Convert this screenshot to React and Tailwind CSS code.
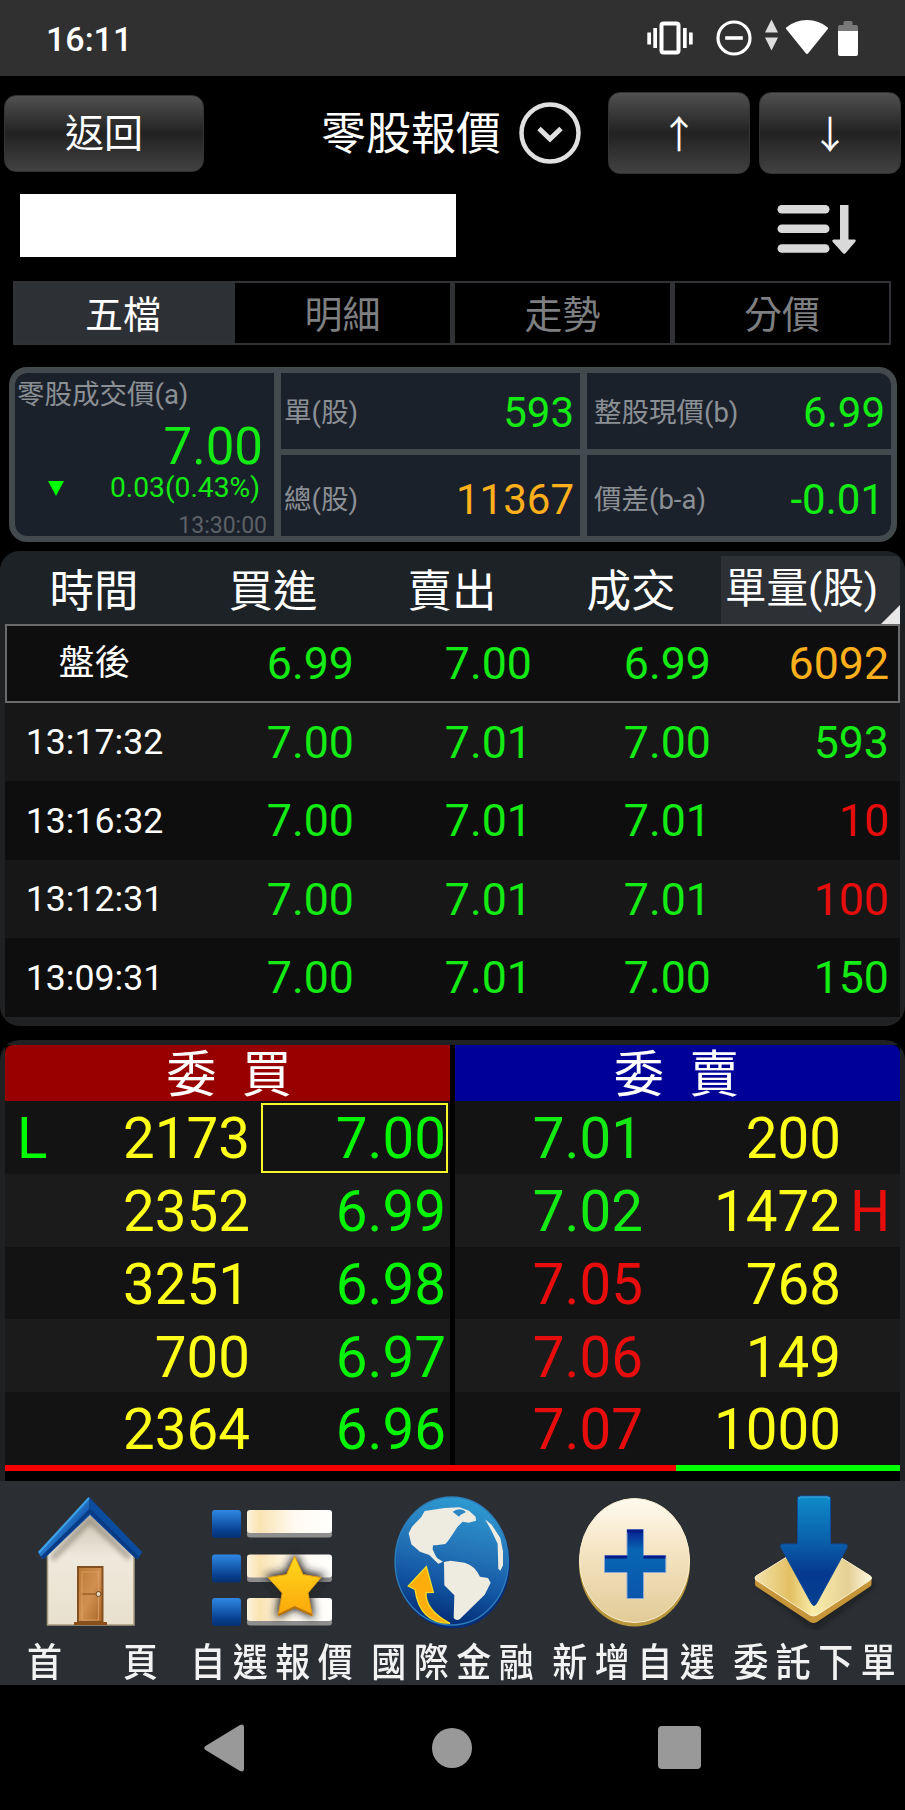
// App.jsx
const GREEN = "text-[#14ea14]";
const RED = "text-[#e80d0d]";
const ORANGE = "text-[#fdb01c]";

const tabs = ["五檔", "明細", "走勢", "分價"];

const trades = [
  { time: "盤後", bid: "6.99", ask: "7.00", price: "6.99", vol: "6092", volColor: ORANGE },
  { time: "13:17:32", bid: "7.00", ask: "7.01", price: "7.00", vol: "593", volColor: GREEN },
  { time: "13:16:32", bid: "7.00", ask: "7.01", price: "7.01", vol: "10", volColor: RED },
  { time: "13:12:31", bid: "7.00", ask: "7.01", price: "7.01", vol: "100", volColor: RED },
  { time: "13:09:31", bid: "7.00", ask: "7.01", price: "7.00", vol: "150", volColor: GREEN },
];

const bids = [
  { mark: "L", vol: "2173", price: "7.00" },
  { vol: "2352", price: "6.99" },
  { vol: "3251", price: "6.98" },
  { vol: "700", price: "6.97" },
  { vol: "2364", price: "6.96" },
];

const asks = [
  { price: "7.01", vol: "200", color: GREEN },
  { price: "7.02", vol: "1472", color: GREEN, mark: "H" },
  { price: "7.05", vol: "768", color: RED },
  { price: "7.06", vol: "149", color: RED },
  { price: "7.07", vol: "1000", color: RED },
];

function StatusBar() {
  return (
    <div className="flex h-[76px] items-center justify-between bg-[#303030] pl-[46px] pr-[46px]">
      <span className="pt-[2px] text-[34px] leading-none font-medium">16:11</span>
      <div className="flex items-center">
        <svg width="46" height="34" viewBox="0 0 46 34" fill="#fff" className="mr-[23px]">
          <rect x="14.5" y="2.5" width="17" height="29" rx="2" fill="none" stroke="#fff" strokeWidth="4" />
          <rect x="6.3" y="7" width="3.7" height="20" />
          <rect x="0.3" y="11.5" width="3.7" height="12" />
          <rect x="36" y="7" width="3.7" height="20" />
          <rect x="42" y="11.5" width="3.7" height="12" />
        </svg>
        <svg width="36" height="36" viewBox="0 0 36 36" fill="none" stroke="#fff" className="mr-[13px]">
          <circle cx="18" cy="18" r="16" strokeWidth="3.2" />
          <path d="M9.2 18h17.6" strokeWidth="3.6" />
        </svg>
        <svg width="13" height="32" viewBox="0 0 13 32" fill="#ddd" className="mr-[7px] -mt-[6px]">
          <path d="M6.5 0.5L13 13.5H0z" />
          <path d="M0 18.5h13L6.5 31.5z" />
        </svg>
        <svg width="44" height="36" viewBox="0 0 44 36" fill="#fff" className="mr-[9px] -mt-[3px]">
          <path d="M1.2 8.5Q10 1 22 1t20.8 7.5q.6.7 0 1.5L23.2 34.3q-1.2 1.3-2.4 0L1.2 10q-.6-.8 0-1.5z" />
        </svg>
        <svg width="20" height="35" viewBox="0 0 20 35" className="mr-px">
          <path d="M5.5 4V1.5Q5.5 0 7 0h6q1.5 0 1.5 1.5V4H18q2 0 2 2v5H0V6q0-2 2-2z" fill="#797979" />
          <path d="M0 10h20v23q0 2-2 2H2q-2 0-2-2z" fill="#fff" />
        </svg>
      </div>
    </div>
  );
}

function GlossButton({ className, children }) {
  return (
    <button
      className={`flex items-center justify-center rounded-xl border border-[#333] bg-linear-to-b from-[#515151] via-[#222] to-[#424242] ${className}`}
    >
      {children}
    </button>
  );
}

function Header() {
  return (
    <header className="flex h-[114px] items-center pl-1 pr-1">
      <GlossButton className="h-[77px] w-[200px] pt-[3px] text-[39px]">返回</GlossButton>
      <h1 className="ml-[117px] pt-[2px] text-[45px] leading-none">零股報價</h1>
      <svg width="62" height="62" viewBox="0 0 62 62" fill="none" stroke="#e0e0e0" className="ml-[18px] mr-[27px] shrink-0">
        <circle cx="31" cy="31" r="28.5" strokeWidth="4.5" />
        <path d="M20 26.5l11 10.5 11-10.5" strokeWidth="5" />
      </svg>
      <GlossButton className="h-[82px] w-[142px] pb-[4px] text-[38px]">
        <span className="font-['Noto_Sans_CJK_TC']">↑</span>
      </GlossButton>
      <GlossButton className="ml-[9px] h-[82px] w-[142px] pb-[4px] text-[38px]">
        <span className="font-['Noto_Sans_CJK_TC']">↓</span>
      </GlossButton>
    </header>
  );
}

function SearchRow() {
  return (
    <div className="flex h-[91px] items-start justify-between pl-[20px] pr-[48px] pt-1">
      <div className="h-[63px] w-[436px] bg-white" />
      <svg width="80" height="50" viewBox="0 0 80 50" fill="#d9d9d9" className="mt-[11px]">
        <rect x="0.5" y="0" width="52" height="8.5" rx="4.25" />
        <rect x="0.5" y="19.5" width="52" height="8.5" rx="4.25" />
        <rect x="0.5" y="39.2" width="52" height="8.5" rx="4.25" />
        <path d="M63 0h8.5v34.5h6q2 .5.8 2.300l-9.8 11.4q-1.2 1-2.5 0L55.5 36.8q-1-1.8 1-2.300H63z" />
      </svg>
    </div>
  );
}

function Tabs() {
  return (
    <div className="ml-[13px] mr-[14px] grid h-[64px] grid-cols-[220px_215px_220px_1fr] border-2 border-[#303235] text-[38px] leading-none">
      {tabs.map((t, i) => (
        <button
          key={t}
          className={
            i === 0
              ? "bg-[#2d3136] pt-[4px] pr-[4px] text-white"
              : i === 1
                ? "pt-[4px] text-[#7d7f80]"
                : "border-l-[5px] border-[#303235] pt-[4px] text-[#7d7f80]"
          }
        >
          {t}
        </button>
      ))}
    </div>
  );
}

function QuoteCell({ label, value, color, className }) {
  return (
    <div className={`flex items-center justify-between bg-[#1b212b] leading-none ${className}`}>
      <span className="text-[27.5px] text-[#8b9095]">{label}</span>
      <span className={`text-[42px] ${color}`}>{value}</span>
    </div>
  );
}

function QuotePanel() {
  return (
    <section className="ml-[9px] mr-[8px] mt-[22px] grid h-[175px] grid-cols-[259px_299px_1fr] grid-rows-[76px_1fr] gap-x-[7px] gap-y-[6px] overflow-hidden rounded-[18px] border-[6px] border-[#434a4d] bg-[#434a4d]">
      <div className="row-span-2 flex flex-col rounded-l-xl bg-[#1b212b] leading-none">
        <span className="pl-[2px] pt-[8px] text-[27.5px] text-[#8b9095]">零股成交價(a)</span>
        <span className={`mt-[12px] pr-[11px] text-right text-[51px] ${GREEN}`}>7.00</span>
        <div className={`mt-[2px] flex items-center justify-between pl-[33px] pr-[14px] text-[28.2px] ${GREEN}`}>
          <svg width="16" height="15" viewBox="0 0 16 15" fill="#00ff00" className="mt-[2px]">
            <path d="M0 0h16L8 15z" />
          </svg>
          <span>0.03(0.43%)</span>
        </div>
        <span className="mt-[12px] pr-[7px] text-right text-[23px] text-[#5c6167]">13:30:00</span>
      </div>
      <QuoteCell label="單(股)" value="593" color={GREEN} className="pl-[3px] pr-[6px] pt-[4px]" />
      <QuoteCell label="整股現價(b)" value="6.99" color={GREEN} className="rounded-tr-xl pl-[7px] pr-[6px] pt-[4px]" />
      <QuoteCell label="總(股)" value="11367" color={ORANGE} className="pl-[3px] pr-[6px] pt-[8px]" />
      <QuoteCell label="價差(b-a)" value="-0.01" color={GREEN} className="rounded-br-xl pl-[7px] pr-[7px] pt-[8px]" />
    </section>
  );
}

function TradeTable() {
  return (
    <section className="mt-[9px] h-[475px] overflow-hidden rounded-[20px] bg-[#202122] px-[5px]">
      <div className="-mx-[5px] grid h-[73px] grid-cols-5 grid-rows-[68px] bg-[#1c2225] px-[5px] pt-[5px] text-[44.5px] leading-[72px]">
        <span className="pr-px text-center">時間</span>
        <span className="pr-px text-center">買進</span>
        <span className="pr-px text-center">賣出</span>
        <span className="pr-px text-center">成交</span>
        <div className="relative bg-[#2d3035] pl-[4px] text-[41.5px] leading-[66px] whitespace-nowrap">
          單量(股)
          <svg width="19" height="19" viewBox="0 0 19 19" fill="#e8e8e8" className="absolute bottom-0 right-0">
            <path d="M19 0v19H0z" />
          </svg>
        </div>
      </div>
      <div className="grid h-[393px] grid-rows-5">
        {trades.map((t, i) => (
          <div
            key={t.time}
            className={`grid grid-cols-5 items-center pt-[2px] text-right text-[44.7px] leading-none ${
              i % 2 ? "bg-[#171717]" : "bg-[#0e0e0e]"
            } ${i === 0 ? "outline-2 -outline-offset-2 outline-[#6a6a6a]" : ""}`}
          >
            <span className="text-center text-[35.7px]">{t.time}</span>
            <span className={`pr-[9px] ${GREEN}`}>{t.bid}</span>
            <span className={`pr-[10px] ${GREEN}`}>{t.ask}</span>
            <span className={`pr-[10px] ${GREEN}`}>{t.price}</span>
            <span className={`pr-[11px] ${t.volColor}`}>{t.vol}</span>
          </div>
        ))}
      </div>
    </section>
  );
}

function OrderBook() {
  return (
    <section className="mt-[14px] h-[441px] overflow-hidden rounded-t-[20px] bg-[#202122] px-[5px] pt-[5px]">
      <div className="h-full bg-black">
        <div className="grid h-[420px] grid-cols-2 gap-x-[5px] text-[56.5px] leading-none">
          <div className="grid grid-rows-[56px_repeat(5,1fr)]">
            <h2 className="rounded-tl-lg bg-[#980000] pl-[3px] text-center text-[50px] leading-[60px] [word-spacing:13px]">委 買</h2>
            {bids.map((b, i) => (
              <div
                key={b.price}
                className={`grid grid-cols-[60px_185px_1fr] items-center pt-[2px] ${i % 2 ? "bg-[#1b1b1b]" : "bg-[#131313]"}`}
              >
                <span className="pl-[12px] pt-[2px] text-[#00ff00]">{b.mark}</span>
                <span className="pt-[2px] text-right text-[#ffff1a]">{b.vol}</span>
                <span
                  className={`ml-[11px] mr-[2px] flex h-[70px] items-center justify-end border-2 pt-[2px] text-[#05f505] ${
                    i === 0 ? "border-[#f7f72a]" : "border-transparent"
                  }`}
                >
                  {b.price}
                </span>
              </div>
            ))}
          </div>
          <div className="grid grid-rows-[56px_repeat(5,1fr)]">
            <h2 className="rounded-tr-lg bg-[#000098] pr-[2px] text-center text-[50px] leading-[60px] [word-spacing:13px]">委 賣</h2>
            {asks.map((a, i) => (
              <div
                key={a.price}
                className={`grid grid-cols-[188px_198px_1fr] items-center pt-[4px] ${i % 2 ? "bg-[#1b1b1b]" : "bg-[#131313]"}`}
              >
                <span className={`text-right ${a.color}`}>{a.price}</span>
                <span className="text-right text-[#ffff1a]">{a.vol}</span>
                <span className={`pl-[9px] ${RED}`}>{a.mark}</span>
              </div>
            ))}
          </div>
        </div>
        {/* 委買委賣比例 */}
        <div className="flex h-[6px]">
          <div className="w-3/4 bg-[#f50000]" />
          <div className="flex-1 bg-[#00ff00]" />
        </div>
      </div>
    </section>
  );
}

function HomeIcon() {
  return (
    <svg width="181" height="145" viewBox="0 0 181 145">
      <defs>
        <linearGradient id="roofL" x1="0" y1="0" x2="1" y2="1">
          <stop offset="0.35" stopColor="#3a9be6" />
          <stop offset="0.6" stopColor="#1558ad" />
        </linearGradient>
        <linearGradient id="wall" x1="0" y1="0" x2="0" y2="1">
          <stop offset="0" stopColor="#c9bfae" />
          <stop offset="0.4" stopColor="#efe9dd" />
          <stop offset="1" stopColor="#e9e0cd" />
        </linearGradient>
        <linearGradient id="door" x1="0" y1="0" x2="1" y2="1">
          <stop offset="0" stopColor="#b87733" />
          <stop offset="0.5" stopColor="#d09050" />
          <stop offset="1" stopColor="#a96526" />
        </linearGradient>
        <filter id="eaves" x="-20%" y="-20%" width="140%" height="140%">
          <feGaussianBlur stdDeviation="2.5" />
        </filter>
      </defs>
      <path d="M47.5 68L90 27l44 41v72H47.5z" fill="url(#wall)" stroke="#a69c80" strokeWidth="1.5" />
      <path d="M52 74L90 35l40 38" fill="none" stroke="#6e675a" strokeWidth="6" opacity=".5" filter="url(#eaves)" />
      <path d="M89 12L38 67l4 7 3-1L90 30z" fill="url(#roofL)" />
      <path d="M89 12l53 55-4 7-3-1L90 30z" fill="#0b4c9e" />
      <path d="M42 73L90 26l48 47" fill="none" stroke="#083a86" strokeWidth="3.5" />
      <path d="M89 13L39 67.5" stroke="#3fa0e6" strokeWidth="2" />
      <path d="M74 137h33v3H74z" fill="#8d4f17" />
      <rect x="78" y="82" width="24.5" height="55" fill="url(#door)" stroke="#85501f" strokeWidth="2" />
      <path d="M81 109h19" stroke="#9d5f24" strokeWidth="1.5" />
      <rect x="82" y="87" width="16.5" height="48" fill="none" stroke="#dba469" strokeWidth=".8" />
      <circle cx="98.5" cy="109" r="2.5" fill="#e6d9c0" stroke="#69401a" />
    </svg>
  );
}

function WatchlistIcon() {
  return (
    <svg width="181" height="145" viewBox="0 0 181 145">
      <defs>
        <linearGradient id="sq" x1="0" y1="0" x2="0" y2="1">
          <stop offset="0" stopColor="#2f88e4" />
          <stop offset="0.75" stopColor="#07408f" />
          <stop offset="1" stopColor="#05306f" />
        </linearGradient>
        <linearGradient id="bar" x1="0" y1="0" x2="1" y2="0">
          <stop offset="0" stopColor="#fdf3dc" />
          <stop offset="0.15" stopColor="#fae3b3" />
          <stop offset="0.55" stopColor="#fffaf0" />
          <stop offset="1" stopColor="#fff" />
        </linearGradient>
        <linearGradient id="star" x1="0" y1="0" x2="0" y2="1">
          <stop offset="0" stopColor="#ffd91c" />
          <stop offset="1" stopColor="#fba70a" />
        </linearGradient>
        <filter id="glow" x="-30%" y="-30%" width="160%" height="160%">
          <feGaussianBlur stdDeviation="4" />
        </filter>
      </defs>
      {[25, 69.5, 113].map((y) => (
        <g key={y}>
          <rect x="31" y={y} width="29" height="28" rx="3" fill="url(#sq)" />
          <rect x="66" y={y + 1} width="85" height="26.5" rx="3" fill="#8e8e8e" />
          <rect x="66" y={y} width="85" height="23" rx="3" fill="url(#bar)" />
        </g>
      ))}
      <path
        d="M114 71l8.5 17.5 18.5 3-13.5 15 3.5 24-17-9.5-17 9.5 3.5-24L87 91.5l18.5-3z"
        fill="#222"
        stroke="#222"
        strokeWidth="4"
        filter="url(#glow)"
      />
      <path d="M113.7 71l8.3 18.5 18 3-13 15.5 4.3 22.5-17.6-8-16.5 8 4-22.5L87 92.5l18.5-3z" fill="url(#star)" stroke="#e39b12" strokeLinejoin="round" />
      <path d="M97.5 130l16.2-8 17.3 8" fill="none" stroke="#b8740a" strokeWidth="2" />
    </svg>
  );
}

function GlobeIcon() {
  return (
    <svg width="181" height="145" viewBox="-54 0 543 435">
      <defs>
        <linearGradient id="sea" x1="0.6" y1="0" x2="0.4" y2="1">
          <stop offset="0" stopColor="#2f9bd2" />
          <stop offset="0.4" stopColor="#2474b8" />
          <stop offset="0.7" stopColor="#1153a0" />
          <stop offset="1" stopColor="#042a74" />
        </linearGradient>
      </defs>
      <ellipse cx="219" cy="236" rx="171" ry="194" fill="#062d77" />
      <ellipse cx="215" cy="228" rx="170" ry="192" fill="url(#sea)" stroke="#2c7fbb" strokeWidth="4" />
      <path d="M124 96l10-18 60-9 45-2 28 10 20 18 1 12-22 6-18-3-16 16-14 22-14 20-8 9-28 4-9 0-1 12 8 18 6 9 17 10-14 6-9-8-18-18-28-10-26-22-8-33 10-20z" fill="#eeece0" />
      <path d="M218 80q15-12 32-5l8 6-16 8-5 6z" fill="#2c86c4" />
      <path d="M192 231l20-4 42 6q30 8 46 42l24 4 8 14-18 36-75 74q-10 6-18-4l2-68-30-30z" fill="#eeece0" />
      <path d="M315 103l20 16 26 40 8 40v42l-8 16-6-6-2-75-20-42z" fill="#eeece0" />
      <path d="M85 303l54-58 21 77-22 1q-2 52 72 92-91 0-105-102z" fill="#fdae0c" stroke="#f4dd25" strokeWidth="4" />
    </svg>
  );
}

function AddIcon() {
  return (
    <svg width="181" height="145" viewBox="0 0 181 145">
      <defs>
        <linearGradient id="coin" x1="0" y1="0" x2="0" y2="1">
          <stop offset="0" stopColor="#fffaf0" />
          <stop offset="0.4" stopColor="#f5e5c4" />
          <stop offset="1" stopColor="#e2cb97" />
        </linearGradient>
        <linearGradient id="plus" x1="0" y1="0" x2="0" y2="1">
          <stop offset="0" stopColor="#061f8f" />
          <stop offset="0.3" stopColor="#0766b3" />
          <stop offset="1" stopColor="#0a55ac" />
        </linearGradient>
      </defs>
      <ellipse cx="91.5" cy="79" rx="55.5" ry="62.5" fill="#b8963c" />
      <ellipse cx="91.5" cy="75.5" rx="55" ry="62" fill="url(#coin)" stroke="#fbf0d2" />
      <path d="M84 44.5h16.5v26h22.3v17h-22.3v26H84v-26H61.5v-17H84z" fill="url(#plus)" stroke="#8ba6d8" />
      <path d="M62 72h22M100.5 72h22M84 46h16" stroke="#071b86" strokeWidth="3" />
    </svg>
  );
}

function OrderIcon() {
  return (
    <svg width="181" height="145" viewBox="0 0 181 145">
      <defs>
        <linearGradient id="plate" x1="0" y1="0" x2="1" y2="0">
          <stop offset="0" stopColor="#f3e2ab" />
          <stop offset="0.3" stopColor="#e2bf62" />
          <stop offset="0.5" stopColor="#f9edaa" />
          <stop offset="0.8" stopColor="#e5cf94" />
          <stop offset="1" stopColor="#fff8e0" />
        </linearGradient>
        <linearGradient id="down" x1="0" y1="0" x2="0" y2="1">
          <stop offset="0" stopColor="#0f8cc9" />
          <stop offset="0.45" stopColor="#0a5ba8" />
          <stop offset="0.7" stopColor="#04398f" />
          <stop offset="1" stopColor="#063f91" />
        </linearGradient>
        <filter id="plateShadow" x="-20%" y="-20%" width="140%" height="140%">
          <feGaussianBlur stdDeviation="3" />
        </filter>
      </defs>
      <path d="M33 100l58-36 60 36-60 44z" fill="#111" opacity=".55" filter="url(#plateShadow)" />
      <path d="M31 92v7q0 2 2 3l53 35q3.5 2 7 0l52.5-35q2-1 2-3v-7z" fill="#c69439" />
      <path d="M32 91l55-34q2.5-1.5 5 0l54.5 34q2 2 0 4L93 130q-3.5 2-7 0L32 95q-2-2 0-4z" fill="url(#plate)" stroke="#fbf1cf" />
      <path d="M73.5 14q0-3 3-3h27q3 0 3 3v45H120q5 0 2.5 4.5l-30 55q-2.5 4-5 0l-30-55Q55 59 59.5 59h14z" fill="url(#down)" stroke="#0c4a97" />
      <path d="M75 14q0-2 2-2h26q2 0 2 2" fill="none" stroke="#3fa9dc" strokeWidth="1.2" />
    </svg>
  );
}

const menu = [
  { label: "首　頁", Icon: HomeIcon, spacing: "tracking-[13px] -mr-[17px]" },
  { label: "自選報價", Icon: WatchlistIcon, spacing: "tracking-[7.5px] -mr-[7.5px]" },
  { label: "國際金融", Icon: GlobeIcon, spacing: "tracking-[7.5px] -mr-[7.5px]" },
  { label: "新增自選", Icon: AddIcon, spacing: "tracking-[7.5px] -mr-[7.5px]" },
  { label: "委託下單", Icon: OrderIcon, spacing: "tracking-[7.5px] -mr-[7.5px]" },
];

function BottomMenu() {
  return (
    <nav className="grid h-[204px] grid-cols-5 bg-[#2b2f33] pt-1">
      {menu.map(({ label, Icon, spacing }) => (
        <button key={label} className="flex flex-col items-center">
          <Icon />
          <span className={`mt-[16px] scale-y-110 text-[35px] leading-none font-medium whitespace-nowrap text-[#f2f2f2] ${spacing}`}>
            {label}
          </span>
        </button>
      ))}
    </nav>
  );
}

function SystemNav() {
  return (
    <div className="flex h-[125px] items-center pl-[204px]">
      <svg width="40" height="48" viewBox="0 0 40 48" fill="#999">
        <path d="M1.5 22L36 1q4-1.5 4 2.5v41q0 4-4 2.5L1.5 26q-2.5-2 0-4z" />
      </svg>
      <div className="ml-[188px] size-[40px] rounded-full bg-[#999]" />
      <div className="ml-[186px] size-[43px] rounded bg-[#999]" />
    </div>
  );
}

export default function App() {
  return (
    <div lang="zh-TW" className="h-[1810px] w-[905px] overflow-hidden bg-black font-[Roboto,'Noto_Sans_CJK_TC',sans-serif] text-white">
      <StatusBar />
      <Header />
      <SearchRow />
      <Tabs />
      <QuotePanel />
      <TradeTable />
      <OrderBook />
      <BottomMenu />
      <SystemNav />
    </div>
  );
}
